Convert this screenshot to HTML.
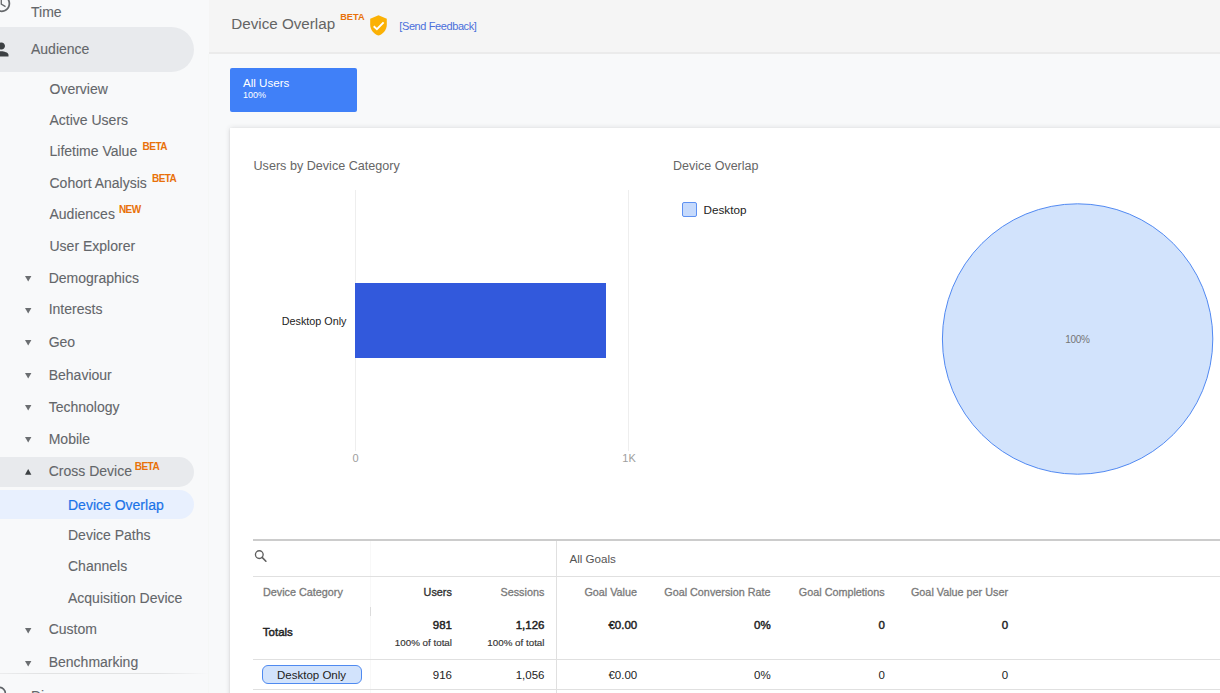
<!DOCTYPE html>
<html><head><meta charset="utf-8"><style>
html,body{margin:0;padding:0;width:1220px;height:693px;overflow:hidden;background:#f8f9fa;}
body{position:relative;font-family:"Liberation Sans", sans-serif;}
.t{position:absolute;line-height:20px;white-space:nowrap;font-family:"Liberation Sans", sans-serif;}
.r{position:absolute;}
svg.r{overflow:visible;}
</style></head><body>
<div class="r" style="left:0px;top:0px;width:1220px;height:693px;background:#f8f9fa;"></div>
<div class="r" style="left:209px;top:0px;width:1011px;height:52px;background:#f5f5f5;"></div>
<div class="r" style="left:209px;top:52px;width:1011px;height:2px;background:#ebebeb;"></div>
<div class="r" style="left:208px;top:54px;width:1px;height:639px;background:#f5f7f6;"></div>
<svg class="r" style="left:-8.85px;top:-6.6px" width="21" height="21" viewBox="0 0 24 24"><path fill="#66696c" d="M11.99 2C6.47 2 2 6.48 2 12s4.47 10 9.99 10C17.52 22 22 17.52 22 12S17.52 2 11.99 2zM12 20c-4.42 0-8-3.58-8-8s3.58-8 8-8 8 3.58 8 8-3.58 8-8 8zm.5-13H11v6l5.25 3.15.75-1.23-4.5-2.67z"/></svg>
<div class="t" style="top:1.75px;font-size:14px;color:#63666a;left:31.00px;-webkit-text-stroke:0.1px #666;">Time</div>
<div class="r" style="left:-30px;top:27px;width:224px;height:45px;background:#e8eaed;border-radius:0 22.5px 22.5px 0;"></div>
<svg class="r" style="left:-9.2px;top:39.1px" width="21" height="21" viewBox="0 0 24 24"><path fill="#3c4043" d="M12 12c2.21 0 4-1.79 4-4s-1.79-4-4-4-4 1.79-4 4 1.79 4 4 4zm0 2c-2.67 0-8 1.34-8 4v2h16v-2c0-2.66-5.33-4-8-4z"/></svg>
<div class="t" style="top:38.85px;font-size:14px;color:#63666a;left:31.00px;-webkit-text-stroke:0.1px #666;">Audience</div>
<div class="t" style="top:79.05px;font-size:14px;color:#63666a;left:49.50px;-webkit-text-stroke:0.1px #666;">Overview</div>
<div class="t" style="top:109.75px;font-size:14px;color:#63666a;left:49.50px;-webkit-text-stroke:0.1px #666;">Active Users</div>
<div class="t" style="top:141.15px;font-size:14px;color:#63666a;left:49.50px;-webkit-text-stroke:0.1px #666;">Lifetime Value</div>
<div class="t" style="top:172.65px;font-size:14px;color:#63666a;left:49.50px;-webkit-text-stroke:0.1px #666;">Cohort Analysis</div>
<div class="t" style="top:204.25px;font-size:14px;color:#63666a;left:49.50px;-webkit-text-stroke:0.1px #666;">Audiences</div>
<div class="t" style="top:236.15px;font-size:14px;color:#63666a;left:49.50px;-webkit-text-stroke:0.1px #666;">User Explorer</div>
<div class="t" style="top:137.22px;font-size:10px;color:#e8710a;font-weight:700;letter-spacing:-0.55px;left:142.60px;">BETA</div>
<div class="t" style="top:169.02px;font-size:10px;color:#e8710a;font-weight:700;letter-spacing:-0.55px;left:152.00px;">BETA</div>
<div class="t" style="top:199.52px;font-size:10px;color:#e8710a;font-weight:700;letter-spacing:-0.55px;left:118.90px;">NEW</div>
<div class="r" style="left:-30px;top:457px;width:224px;height:30px;background:#e8eaed;border-radius:0 15px 15px 0;"></div>
<div class="r" style="left:-30px;top:489.5px;width:224px;height:29.0px;background:#e8f0fe;border-radius:0 14.5px 14.5px 0;"></div>
<div class="t" style="top:267.65px;font-size:14px;color:#63666a;left:48.70px;-webkit-text-stroke:0.1px #666;">Demographics</div>
<svg class="r" style="left:25.1px;top:275.9px" width="6.4" height="5.6" viewBox="0 0 6.4 5.6"><path fill="#6b6e71" d="M0 0L6.4 0L3.2 5.6z"/></svg>
<div class="t" style="top:299.25px;font-size:14px;color:#63666a;left:48.70px;-webkit-text-stroke:0.1px #666;">Interests</div>
<svg class="r" style="left:25.1px;top:307.5px" width="6.4" height="5.6" viewBox="0 0 6.4 5.6"><path fill="#6b6e71" d="M0 0L6.4 0L3.2 5.6z"/></svg>
<div class="t" style="top:332.05px;font-size:14px;color:#63666a;left:48.70px;-webkit-text-stroke:0.1px #666;">Geo</div>
<svg class="r" style="left:25.1px;top:340.29999999999995px" width="6.4" height="5.6" viewBox="0 0 6.4 5.6"><path fill="#6b6e71" d="M0 0L6.4 0L3.2 5.6z"/></svg>
<div class="t" style="top:364.75px;font-size:14px;color:#63666a;left:48.70px;-webkit-text-stroke:0.1px #666;">Behaviour</div>
<svg class="r" style="left:25.1px;top:373.0px" width="6.4" height="5.6" viewBox="0 0 6.4 5.6"><path fill="#6b6e71" d="M0 0L6.4 0L3.2 5.6z"/></svg>
<div class="t" style="top:397.15px;font-size:14px;color:#63666a;left:48.70px;-webkit-text-stroke:0.1px #666;">Technology</div>
<svg class="r" style="left:25.1px;top:405.4px" width="6.4" height="5.6" viewBox="0 0 6.4 5.6"><path fill="#6b6e71" d="M0 0L6.4 0L3.2 5.6z"/></svg>
<div class="t" style="top:429.15px;font-size:14px;color:#63666a;left:48.70px;-webkit-text-stroke:0.1px #666;">Mobile</div>
<svg class="r" style="left:25.1px;top:437.4px" width="6.4" height="5.6" viewBox="0 0 6.4 5.6"><path fill="#6b6e71" d="M0 0L6.4 0L3.2 5.6z"/></svg>
<div class="t" style="top:461.35px;font-size:14px;color:#63666a;left:48.70px;-webkit-text-stroke:0.1px #666;">Cross Device</div>
<svg class="r" style="left:25.1px;top:469.1px" width="6.4" height="5.8" viewBox="0 0 6.4 5.8"><path fill="#3c4043" d="M0 5.8L3.2 0L6.4 5.8z"/></svg>
<div class="t" style="top:456.93px;font-size:10px;color:#e8710a;font-weight:700;letter-spacing:-0.55px;left:134.80px;">BETA</div>
<div class="t" style="top:494.55px;font-size:14px;color:#1a73e8;left:68.00px;-webkit-text-stroke:0.2px #1a73e8;">Device Overlap</div>
<div class="t" style="top:524.95px;font-size:14px;color:#63666a;left:68.00px;-webkit-text-stroke:0.1px #666;">Device Paths</div>
<div class="t" style="top:556.35px;font-size:14px;color:#63666a;left:68.00px;-webkit-text-stroke:0.1px #666;">Channels</div>
<div class="t" style="top:588.35px;font-size:14px;color:#63666a;left:68.00px;-webkit-text-stroke:0.1px #666;">Acquisition Device</div>
<div class="t" style="top:619.45px;font-size:14px;color:#63666a;left:48.70px;-webkit-text-stroke:0.1px #666;">Custom</div>
<svg class="r" style="left:25.1px;top:627.6999999999999px" width="6.4" height="5.6" viewBox="0 0 6.4 5.6"><path fill="#6b6e71" d="M0 0L6.4 0L3.2 5.6z"/></svg>
<div class="t" style="top:652.35px;font-size:14px;color:#63666a;left:48.70px;-webkit-text-stroke:0.1px #666;">Benchmarking</div>
<svg class="r" style="left:25.1px;top:660.6px" width="6.4" height="5.6" viewBox="0 0 6.4 5.6"><path fill="#6b6e71" d="M0 0L6.4 0L3.2 5.6z"/></svg>
<div class="r" style="left:0px;top:672.5px;width:209px;height:1.0px;background:linear-gradient(90deg,rgba(0,0,0,0.05),rgba(0,0,0,0.09) 20%,rgba(0,0,0,0.09) 75%,rgba(0,0,0,0));"></div>
<svg class="r" style="left:-9px;top:685px" width="20" height="20" viewBox="0 0 24 24"><circle cx="10" cy="10" r="7.2" fill="none" stroke="#5f6368" stroke-width="1.9"/></svg>
<div class="t" style="top:685.65px;font-size:14px;color:#63666a;left:31.00px;-webkit-text-stroke:0.1px #666;">Discover</div>
<div class="t" style="top:14.33px;font-size:15.2px;color:#646464;left:231.30px;">Device Overlap</div>
<div class="t" style="top:6.92px;font-size:9.2px;color:#e8710a;font-weight:700;left:340.20px;">BETA</div>
<svg class="r" style="left:369px;top:15px" width="19" height="21" viewBox="0 0 19 21"><path fill="#fbb104" d="M9.5 0.3L1.2 3.8V9.6C1.2 14.8 4.8 19.4 9.5 20.6C14.2 19.4 17.8 14.8 17.8 9.6V3.8Z"/><path fill="none" stroke="#fff" stroke-width="1.9" d="M4.7 11.3L7.9 14.2L14.6 7.4"/></svg>
<div class="t" style="top:15.79px;font-size:11px;color:#4b6fdb;letter-spacing:-0.4px;left:399.30px;">[Send Feedback]</div>
<div class="r" style="left:230px;top:68px;width:127px;height:44px;background:#4080f8;border-radius:2px;"></div>
<div class="t" style="top:73.18px;font-size:11.6px;color:#fff;left:243.00px;">All Users</div>
<div class="t" style="top:84.98px;font-size:9px;color:#fff;left:243.00px;">100%</div>
<div class="r" style="left:230px;top:128px;width:1010px;height:592px;background:#fff;box-shadow:0 0 5px rgba(60,64,67,0.16),0 1px 2px rgba(60,64,67,0.12);"></div>
<div class="t" style="top:155.83px;font-size:12.6px;color:#666;left:253.50px;">Users by Device Category</div>
<div class="r" style="left:355px;top:190px;width:1px;height:261px;background:#eeeeee;"></div>
<div class="r" style="left:628px;top:190px;width:1px;height:261px;background:#eeeeee;"></div>
<div class="r" style="left:355px;top:283px;width:251px;height:75px;background:#3259dc;"></div>
<div class="t" style="top:311.06px;font-size:10.8px;color:#222;left:-53.50px;width:400px;text-align:right;">Desktop Only</div>
<div class="t" style="top:448.19px;font-size:11px;color:#9e9e9e;left:155.50px;width:400px;text-align:center;">0</div>
<div class="t" style="top:448.19px;font-size:11px;color:#9e9e9e;left:429.00px;width:400px;text-align:center;">1K</div>
<div class="t" style="top:155.67px;font-size:12.5px;color:#666;left:673.00px;">Device Overlap</div>
<div class="r" style="left:682px;top:202px;width:15px;height:15px;background:#c6dafc;border:1.5px solid #5e91f2;border-radius:2px;box-sizing:border-box;"></div>
<div class="t" style="top:199.85px;font-size:11.7px;color:#222;left:703.50px;">Desktop</div>
<svg class="r" style="left:930px;top:190px" width="300" height="300" viewBox="930 190 300 300"><circle cx="1077.6" cy="339" r="135.2" fill="#d2e3fc" stroke="#5189f2" stroke-width="1"/></svg>
<div class="t" style="top:329.54px;font-size:10px;color:#757575;letter-spacing:-0.3px;left:877.50px;width:400px;text-align:center;">100%</div>
<div class="r" style="left:253px;top:539px;width:987px;height:2px;background:#cccccc;"></div>
<svg class="r" style="left:250px;top:545px" width="25" height="25" viewBox="250 545 25 25"><circle cx="259.3" cy="554.6" r="3.85" fill="none" stroke="#5f5f5f" stroke-width="1.35"/><path d="M262.1 557.4L265.9 561.2" stroke="#5f5f5f" stroke-width="1.6" stroke-linecap="round"/></svg>
<div class="r" style="left:370px;top:541px;width:1px;height:152px;background:#f8f8f8;"></div>
<div class="r" style="left:370px;top:607px;width:1px;height:9px;background:#dcdcdc;"></div>
<div class="r" style="left:556px;top:541px;width:1px;height:152px;background:#e0e0e0;"></div>
<div class="t" style="top:549.18px;font-size:11.6px;color:#555;left:569.50px;">All Goals</div>
<div class="r" style="left:253px;top:576px;width:987px;height:1px;background:#e0e0e0;"></div>
<div class="r" style="left:253px;top:659px;width:987px;height:1px;background:#e0e0e0;"></div>
<div class="r" style="left:253px;top:689px;width:987px;height:1px;background:#e0e0e0;"></div>
<div class="t" style="top:582.26px;font-size:10.8px;color:#7a7a7a;left:263.00px;-webkit-text-stroke:0.3px #7a7a7a;">Device Category</div>
<div class="t" style="top:582.26px;font-size:10.8px;color:#333;left:51.80px;width:400px;text-align:right;-webkit-text-stroke:0.35px #333;">Users</div>
<div class="t" style="top:582.26px;font-size:10.8px;color:#7a7a7a;left:144.30px;width:400px;text-align:right;-webkit-text-stroke:0.3px #7a7a7a;">Sessions</div>
<div class="t" style="top:582.26px;font-size:10.8px;color:#7a7a7a;left:237.00px;width:400px;text-align:right;-webkit-text-stroke:0.3px #7a7a7a;">Goal Value</div>
<div class="t" style="top:582.26px;font-size:10.8px;color:#7a7a7a;left:370.50px;width:400px;text-align:right;-webkit-text-stroke:0.3px #7a7a7a;">Goal Conversion Rate</div>
<div class="t" style="top:582.26px;font-size:10.8px;color:#7a7a7a;left:484.70px;width:400px;text-align:right;-webkit-text-stroke:0.3px #7a7a7a;">Goal Completions</div>
<div class="t" style="top:582.26px;font-size:10.8px;color:#7a7a7a;left:608.00px;width:400px;text-align:right;-webkit-text-stroke:0.3px #7a7a7a;">Goal Value per User</div>
<div class="t" style="top:622.02px;font-size:11.5px;color:#222;left:262.80px;-webkit-text-stroke:0.45px #222;">Totals</div>
<div class="t" style="top:614.82px;font-size:11.5px;color:#222;left:52.00px;width:400px;text-align:right;-webkit-text-stroke:0.45px #222;">981</div>
<div class="t" style="top:614.82px;font-size:11.5px;color:#222;left:144.50px;width:400px;text-align:right;-webkit-text-stroke:0.45px #222;">1,126</div>
<div class="t" style="top:614.82px;font-size:11.5px;color:#222;left:237.20px;width:400px;text-align:right;-webkit-text-stroke:0.45px #222;">&euro;0.00</div>
<div class="t" style="top:614.82px;font-size:11.5px;color:#222;left:370.70px;width:400px;text-align:right;-webkit-text-stroke:0.45px #222;">0%</div>
<div class="t" style="top:614.82px;font-size:11.5px;color:#222;left:484.90px;width:400px;text-align:right;-webkit-text-stroke:0.45px #222;">0</div>
<div class="t" style="top:614.82px;font-size:11.5px;color:#222;left:608.20px;width:400px;text-align:right;-webkit-text-stroke:0.45px #222;">0</div>
<div class="t" style="top:633.40px;font-size:9.8px;color:#333;left:52.00px;width:400px;text-align:right;-webkit-text-stroke:0.15px #333;">100% of total</div>
<div class="t" style="top:633.40px;font-size:9.8px;color:#333;left:144.50px;width:400px;text-align:right;-webkit-text-stroke:0.15px #333;">100% of total</div>
<div class="r" style="left:262px;top:665px;width:100px;height:19px;background:#d2e3fc;border:1px solid #4f8af0;border-radius:6px;box-sizing:border-box;"></div>
<div class="t" style="top:664.92px;font-size:11.5px;color:#222;left:277.00px;">Desktop Only</div>
<div class="t" style="top:664.92px;font-size:11.5px;color:#222;left:52.00px;width:400px;text-align:right;">916</div>
<div class="t" style="top:664.92px;font-size:11.5px;color:#222;left:144.50px;width:400px;text-align:right;">1,056</div>
<div class="t" style="top:664.92px;font-size:11.5px;color:#222;left:237.20px;width:400px;text-align:right;">&euro;0.00</div>
<div class="t" style="top:664.92px;font-size:11.5px;color:#222;left:370.70px;width:400px;text-align:right;">0%</div>
<div class="t" style="top:664.92px;font-size:11.5px;color:#222;left:484.90px;width:400px;text-align:right;">0</div>
<div class="t" style="top:664.92px;font-size:11.5px;color:#222;left:608.20px;width:400px;text-align:right;">0</div>
</body></html>
